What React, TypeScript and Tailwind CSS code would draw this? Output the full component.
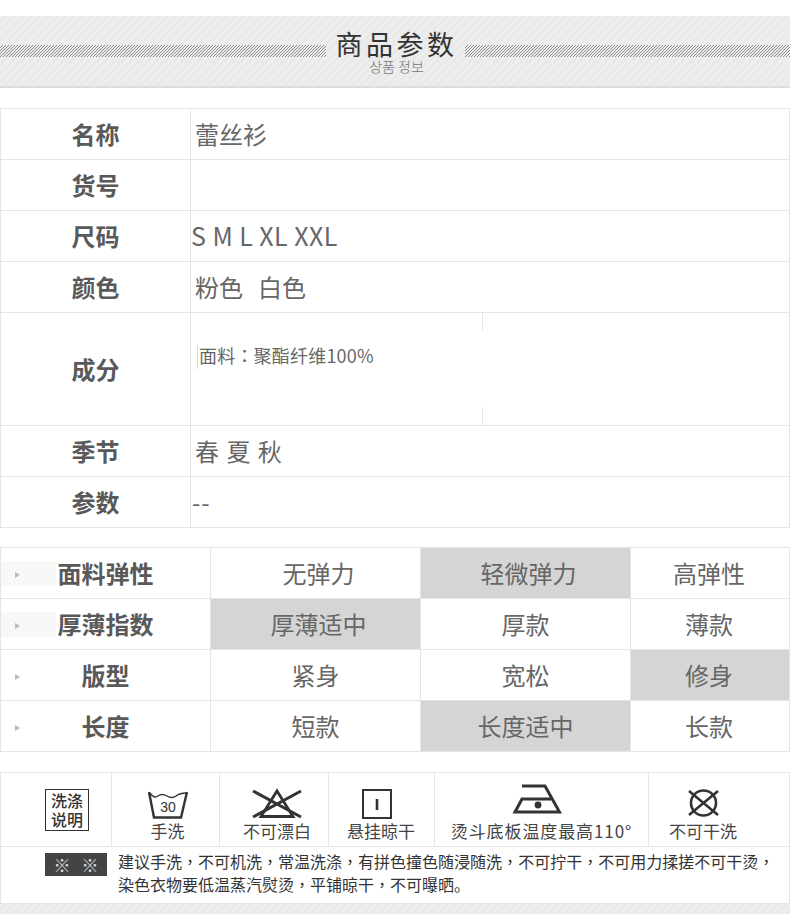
const specs = [
  { label: "名称", value: "蕾丝衫", valueClass: "pl-[4px] text-[24px]" },
  { label: "货号", value: "", valueClass: "" },
  { label: "尺码", value: "S M L XL XXL", valueClass: "text-[25px] tracking-[0.45px]" },
];

const fits = [
  { label: "面料弹性", options: ["无弹力", "轻微弹力", "高弹性"], active: 1, shade: true, shift: [true, true, false] },
  { label: "厚薄指数", options: ["厚薄适中", "厚款", "薄款"], active: 0, shade: true, shift: [true, false, false] },
  { label: "版型", options: ["紧身", "宽松", "修身"], active: 2, shade: false, shift: [false, false, false] },
  { label: "长度", options: ["短款", "长度适中", "长款"], active: 1, shade: false, shift: [false, false, false] },
];

function Label({ children }: { children: React.ReactNode }) {
  return <span className="text-[24px] font-bold text-[#595959]">{children}</span>;
}

function SpecRow({ label, children, tall }: { label: string; children?: React.ReactNode; tall?: boolean }) {
  return (
    <div className={`grid grid-cols-[190px_1fr] border-b border-[#e5e5e5] ${tall ? "h-[113px]" : "h-[51px]"}`}>
      <div className="flex items-center justify-center border-r border-[#e5e5e5]">
        <Label>{label}</Label>
      </div>
      {children}
    </div>
  );
}

function Hatch({ id }: { id: string }) {
  return (
    <svg className="h-[12px] flex-1" shapeRendering="crispEdges">
      <defs>
        <pattern id={id} width="3" height="3" patternUnits="userSpaceOnUse">
          <rect width="3" height="3" fill="#eeeeee" />
          <rect x="2" y="0" width="1" height="1" fill="#8a8a8a" />
          <rect x="1" y="1" width="1" height="1" fill="#8a8a8a" />
          <rect x="0" y="2" width="1" height="1" fill="#8a8a8a" />
        </pattern>
      </defs>
      <rect width="100%" height="100%" fill={`url(#${id})`} />
    </svg>
  );
}

// the comma sits mid-cell in the original, the TC face draws it that way
function Note({ text }: { text: string }) {
  return (
    <>
      {text.split("，").map((part, i) => (
        <span key={i}>
          {i > 0 && <span className="font-['Noto_Sans_CJK_TC',sans-serif]">，</span>}
          {part}
        </span>
      ))}
    </>
  );
}

function TubIcon() {
  return (
    <svg width="40" height="29" viewBox="0 0 40 29" fill="none" stroke="#333" strokeWidth="2.4">
      <path d="M1 2 L6 27.5 H33 L39 2" />
      <path d="M2 3 Q6 9 10 6 T19 6 T28 6 T38 3" strokeWidth="1.4" />
      <text x="20" y="22" textAnchor="middle" fontSize="14" fill="#333" stroke="none" fontFamily="Liberation Sans, sans-serif">30</text>
    </svg>
  );
}

function NoBleachIcon() {
  return (
    <svg width="52" height="31" viewBox="0 0 52 31" fill="none" stroke="#333">
      <path d="M26 3 L42 28.5 H10 Z" strokeWidth="2.8" />
      <path d="M2 3 L50 29 M50 3 L2 29" strokeWidth="3" />
    </svg>
  );
}

function HangIcon() {
  return (
    <svg width="30" height="30" viewBox="0 0 30 30" fill="none" stroke="#333">
      <rect x="1" y="1" width="28" height="28" strokeWidth="2" />
      <path d="M15 10 V21" strokeWidth="2.6" />
    </svg>
  );
}

function IronIcon() {
  return (
    <svg width="50" height="30" viewBox="0 0 50 30" fill="none" stroke="#333" strokeWidth="3">
      <path d="M10 2 H33 L47.5 28 H3 L10 15 H39" />
      <circle cx="26" cy="21" r="3.4" fill="#333" stroke="none" />
    </svg>
  );
}

function NoDryCleanIcon() {
  return (
    <svg width="33" height="28" viewBox="0 0 33 28" fill="none" stroke="#333" strokeWidth="2.6">
      <circle cx="16.5" cy="14" r="12.5" />
      <path d="M2 2 L31 26 M31 2 L2 26" />
    </svg>
  );
}

function CareCell({
  icon,
  text,
  className = "",
  iconClass = "",
  textClass = "",
}: {
  icon: React.ReactNode;
  text: string;
  className?: string;
  iconClass?: string;
  textClass?: string;
}) {
  return (
    <div className={`flex flex-col items-center border-r border-[#e5e5e5] ${className}`}>
      <div className={`flex h-[46px] items-end ${iconClass}`}>{icon}</div>
      <span className={`text-[17px] leading-[24px] text-[#444] ${textClass}`}>{text}</span>
    </div>
  );
}

export default function App() {
  return (
    <div className="h-[914px] w-[790px] overflow-hidden bg-white pt-[16px] font-['Noto_Sans_CJK_SC',sans-serif] text-[#666]">
      {/* title band */}
      <div className="relative flex h-[72px] items-center border-b-2 border-[#dedede] bg-[#ebebeb] bg-[repeating-linear-gradient(135deg,#ededed_0,#ededed_3px,#e9e9e9_3px,#e9e9e9_6px)]">
        <Hatch id="hatch-left" />
        <div className="w-[139px]" />
        <Hatch id="hatch-right" />
        <div className="absolute left-[327px] top-[9px] flex w-[139px] flex-col items-center">
          <span className="text-[27px] leading-[38px] tracking-[3.5px] text-[#333]">商品参数</span>
          <span className="-mt-[4px] font-['Noto_Sans_CJK_KR',sans-serif] text-[14px] leading-[14px] font-light text-[#777]">상품 정보</span>
        </div>
      </div>

      {/* spec table */}
      <div className="mt-[20px] border-x border-t border-[#e5e5e5]">
        {specs.map((s) => (
          <SpecRow key={s.label} label={s.label}>
            <div className={`flex items-center ${s.valueClass}`}>{s.value}</div>
          </SpecRow>
        ))}
        <SpecRow label="颜色">
          <div className="flex items-center gap-[15px] pl-[4px] text-[24px]">
            <span>粉色</span>
            <span>白色</span>
          </div>
        </SpecRow>
        <SpecRow label="成分" tall>
          <div className="relative pl-[8px] pt-[29px] text-[18px] leading-[26px] tracking-[0.2px]">
            <span className="absolute left-[6px] top-[32px] h-[24px] w-px bg-[#d8d8d8]" />
            <span className="absolute left-[291px] top-0 h-[17px] w-px bg-[#e5e5e5]" />
            <span className="absolute bottom-0 left-[291px] h-[18px] w-px bg-[#e5e5e5]" />
            <span>面料</span>
            <span className="font-['Noto_Sans_CJK_TC',sans-serif]">：</span>
            <span>聚酯纤维100%</span>
          </div>
        </SpecRow>
        <SpecRow label="季节">
          <div className="flex items-center whitespace-pre pl-[4px] text-[24px] tracking-[1px]">春 夏 秋</div>
        </SpecRow>
        <SpecRow label="参数">
          <div className="flex items-center pl-[1px] text-[24px] tracking-[1px]">--</div>
        </SpecRow>
      </div>

      {/* fit table */}
      <div className="mt-[19px] border-x border-t border-[#e5e5e5]">
        {fits.map((f) => (
          <div key={f.label} className="grid h-[51px] grid-cols-[210px_210px_210px_1fr] border-b border-[#e5e5e5]">
            <div className="relative flex items-center justify-center border-r border-[#e5e5e5]">
              {f.shade && <span className="absolute left-0 top-[13px] h-[25px] w-[55px] bg-[#f8f8f8]" />}
              <span className="absolute left-[14px] top-[24px] h-0 w-0 border-y-[3px] border-l-[5px] border-y-transparent border-l-[#bbb]" />
              <span className="relative"><Label>{f.label}</Label></span>
            </div>
            {f.options.map((o, i) => (
              <div
                key={o}
                className={`flex items-center justify-center text-[24px] ${i < 2 ? "border-r border-[#e5e5e5]" : "pr-[2px]"} ${f.shift[i] ? "pl-[6px]" : ""} ${i === f.active ? "bg-[#d5d5d5]" : ""}`}
              >
                {o}
              </div>
            ))}
          </div>
        ))}
      </div>

      {/* care table */}
      <div className="mt-[20px] border-x border-t border-[#e5e5e5]">
        <div className="grid h-[74px] grid-cols-[111px_108px_109px_106px_214px_1fr] border-b border-[#e5e5e5] text-[#444]">
          <div className="border-r border-[#e5e5e5] pl-[44px] pt-[16px]">
            <div className="flex h-[42px] w-[44px] items-center justify-center border border-[#333] text-center text-[16px] leading-[19px] font-medium text-[#333]">
              洗涤<br />说明
            </div>
          </div>
          <CareCell icon={<TubIcon />} text="手洗" className="pl-[4px]" />
          <CareCell icon={<NoBleachIcon />} text="不可漂白" className="pl-[6px]" />
          <CareCell icon={<HangIcon />} text="悬挂晾干" className="pr-[1px]" iconClass="-translate-x-[4px]" />
          <CareCell
            icon={<IronIcon />}
            text="烫斗底板温度最高110°"
            iconClass="-translate-x-[5px] -translate-y-[5px]"
            textClass="tracking-[0.9px]"
          />
          <div className="flex flex-col items-center pr-[32px]">
            <div className="flex h-[46px] -translate-y-[2px] items-end"><NoDryCleanIcon /></div>
            <span className="text-[17px] leading-[24px]">不可干洗</span>
          </div>
        </div>
        <div className="flex h-[57px] border-b border-[#e5e5e5] pl-[44px] pt-[3px]">
          <div className="mt-[3px] flex h-[23px] w-[62px] items-center justify-center gap-[11px] bg-[#444] text-[17px] leading-none text-[#ddd]">
            <span>※</span><span>※</span>
          </div>
          <p className="ml-[11px] w-[660px] text-[16px] leading-[23px] text-[#333]">
            <Note text="建议手洗，不可机洗，常温洗涤，有拼色撞色随浸随洗，不可拧干，不可用力揉搓不可干烫，" />
            <br />
            <Note text="染色衣物要低温蒸汽熨烫，平铺晾干，不可曝晒。" />
          </p>
        </div>
      </div>
      <div className="h-[10px] bg-[#ebebeb] bg-[repeating-linear-gradient(135deg,#ededed_0,#ededed_3px,#e9e9e9_3px,#e9e9e9_6px)]" />
    </div>
  );
}
